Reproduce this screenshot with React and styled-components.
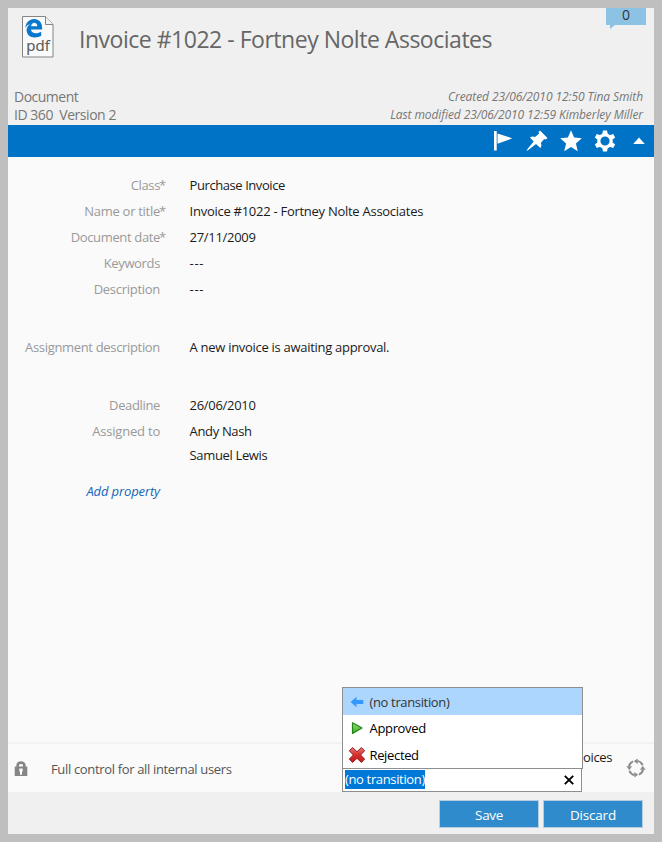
import React from 'react';
import styled, { createGlobalStyle, css } from 'styled-components';

const GlobalStyle = createGlobalStyle`
  * { box-sizing: border-box; }
  body { margin: 0; }
`;

const Card = styled.main`
  width: 662px;
  height: 842px;
  border: 8px solid #bfbfbf;
  display: flex;
  flex-direction: column;
  overflow: hidden;
  background: #fafafa;
  color: #1b1b1b;
  font: 13px/26px "Open Sans", "Noto Sans", sans-serif;
`;

const Text = styled.span`
  letter-spacing: ${(p) => p.$track ?? -0.35}px;
  white-space: pre;
`;

const Header = styled.header`
  height: 117px;
  flex: none;
  background: #f0f0f0;
  display: flex;
  flex-direction: column;
  justify-content: space-between;
`;

const Heading = styled.div`
  display: flex;
  align-items: flex-start;
  padding: 7px 8px 0 13px;
`;

const Title = styled.h1`
  flex: 1;
  margin: 8px 0 0 24px;
  font-size: 23px;
  line-height: 32px;
  font-weight: 400;
  letter-spacing: -0.48px;
  color: #666;
`;

const Comments = styled.div`
  position: relative;
  width: 40px;
  height: 17px;
  margin-top: -7px;
  background: #8cc3e4;
  color: #333;
  font-size: 14px;
  line-height: 14px;
  text-align: center;

  &::after {
    content: "";
    position: absolute;
    left: 4px;
    top: 17px;
    border-top: 4px solid #8cc3e4;
    border-right: 5px solid transparent;
  }
`;

const Meta = styled.div`
  display: flex;
  justify-content: space-between;
  padding: 0 11px 1px 6px;
  color: #777;
`;

const MetaBlock = styled.div`
  display: flex;
  flex-direction: column;
  font-size: 14px;
  line-height: 18px;
  ${(p) =>
    p.$side === 'right' &&
    css`
      align-items: flex-end;
      font-size: 12px;
      font-style: italic;
    `}
`;

const Toolbar = styled.nav`
  height: 32px;
  flex: none;
  background: #0173c7;
  display: flex;
  justify-content: flex-end;
  align-items: center;
`;

const ToolButton = styled.button`
  width: 34px;
  height: 32px;
  padding: 0;
  border: 0;
  background: none;
  display: grid;
  place-items: center;

  &:last-child {
    width: 32px;
    padding-left: 2px;
  }
`;

const Properties = styled.section`
  flex: 1;
  padding-top: 15px;
`;

const Property = styled.div`
  display: grid;
  grid-template-columns: 152px 1fr;
  column-gap: 29.6px;
  margin-bottom: ${(p) => p.$after ?? 0}px;
`;

const Label = styled.div`
  display: flex;
  justify-content: flex-end;
  color: #999;
`;

const Required = styled.span`
  width: 0;
  margin-left: -1px;
  margin-right: 1px;
`;

const Values = styled.div`
  display: flex;
  flex-direction: column;
`;

const Value = styled(Text)`
  & + & {
    line-height: 22px;
  }
`;

const AddProperty = styled.a`
  display: block;
  width: 152px;
  margin-top: 12px;
  text-align: right;
  font-style: italic;
  color: #1565b8;
`;

const StatusBar = styled.section`
  height: 50px;
  flex: none;
  border-top: 2px solid #f2f2f2;
  display: flex;
  align-items: center;
  padding: 1px 8px 0 6px;
`;

const Permissions = styled.div`
  width: 328px;
  display: flex;
  align-items: center;
  gap: 22px;
  color: #555;
`;

const StatePicker = styled.div`
  position: relative;
  width: 240px;
  height: 24px;
  align-self: flex-end;
`;

const StateInput = styled.div`
  height: 24px;
  border: 1px solid #8e8e8e;
  border-top-width: 0;
  background: #fff;
  display: flex;
  align-items: center;
  justify-content: space-between;
  padding: 0 7px 0 2px;
`;

const Selection = styled(Text)`
  height: 19px;
  line-height: 19px;
  background: #0078d7;
  color: #fff;
`;

const Menu = styled.div`
  position: absolute;
  left: 0;
  bottom: 23px;
  width: 241px;
  height: 82px;
  border: 1px solid #8e8e8e;
  background: #fff;
`;

const MenuItem = styled.div`
  display: flex;
  align-items: center;
  gap: 4.5px;
  height: ${(p) => (p.$active ? 27 : 26.5)}px;
  padding-left: 6px;
  color: ${(p) => (p.$active ? '#333' : '#000')};
  background: ${(p) => (p.$active ? '#add6ff' : '#fff')};
`;

const StateName = styled.div`
  flex: 1;
  align-self: flex-start;
  line-height: 24px;
  padding-left: 1px;
`;

const Footer = styled.footer`
  height: 42px;
  flex: none;
  background: #f0f0f0;
  display: flex;
  justify-content: flex-end;
  gap: 4px;
  padding: 8px 11px 0 0;
`;

const ActionButton = styled.button`
  width: 100px;
  height: 28px;
  padding: 1px 0 0;
  border: 1px solid #b5cde0;
  background: #308bcc;
  color: #fff;
  font: 13.5px/24px "Open Sans", sans-serif;
`;

const PdfIcon = () => (
  <svg width="34" height="44" viewBox="0 0 34 44">
    <path d="M1.500 1.500h23l7.500 8v32.500h-30.500z" fill="#fafafa" stroke="#858585" />
    <path d="M24.500 1.500v8h7.500" fill="#f0f0f0" stroke="#858585" />
    <path
      fill="#0878cf"
      fillRule="evenodd"
      d="M4.300 13C4.800 7.800 8.200 4.100 13.100 4.100c5.200 0 8 3.600 8 8.600v1.900H10c.2 2.500 2.300 3.700 4.900 3.700 2 0 3.800-.6 5.300-1.500v4c-1.800 1.100-3.900 1.700-6.400 1.700-5 0-8.200-2.900-8.200-7.400 0-2.800 1.500-5 4-6.400-2.500.7-4.100 2.100-5.300 4.300zM10.100 11.200h6.200c0-2.300-1.100-3.500-2.900-3.500s-3 1.300-3.300 3.500z"
    />
    <text x="17" y="36.300" textAnchor="middle" fontFamily="Open Sans" fontSize="15" fill="#5c5c5c" stroke="#5c5c5c" strokeWidth=".2">
      pdf
    </text>
  </svg>
);

const FlagIcon = () => (
  <svg width="20" height="22" viewBox="0 0 20 22" fill="#fff">
    <path d="M1 1h2.700v19.500H1zM4.500 3.500L19.300 8.300l-14.800 5.500z" />
  </svg>
);

const PinIcon = () => (
  <svg width="22" height="22" viewBox="0 0 22 22" fill="#fff">
    <path d="M14 .5L21.500 8l-1.800 1.500-1.500-.5-3.400 3.900c.9 1.700.7 3.500-.4 5.100L10 13.900 2.300 20 .5 21l1-1.900 6.200-7.600L3.900 7.600c1.700-1.200 3.500-1.300 5.100-.5l4-3.400-.4-1.700z" />
  </svg>
);

const StarIcon = () => (
  <svg width="22" height="22" viewBox="0 0 22 22" fill="#fff">
    <path d="M11 .3l3.100 7.300 7.700.7-5.900 5.200 1.900 7.800-6.800-4.300-6.800 4.300 1.900-7.800L.2 8.300l7.700-.7z" />
  </svg>
);

const GearIcon = () => (
  <svg width="22" height="22" viewBox="-11 -11 22 22">
    <circle r="6.200" fill="none" stroke="#fff" strokeWidth="3.200" />
    {[0, 60, 120, 180, 240, 300].map((a) => (
      <path key={a} transform={`rotate(${a})`} d="M-2.700-7l.7-3.600h4l.7 3.600z" fill="#fff" />
    ))}
  </svg>
);

const CollapseIcon = () => (
  <svg width="12" height="8" viewBox="0 0 12 8">
    <path d="M6 .5l5.800 6.500H.2z" fill="#fff" />
  </svg>
);

const LockIcon = () => (
  <svg width="15" height="17" viewBox="0 0 15 17">
    <path d="M3.700 8V4.600a3.500 3 0 0 1 6.600 0V8" fill="none" stroke="#858585" strokeWidth="2.600" />
    <path d="M.7 6.500h12.600v9.500H.7z" fill="#858585" />
    <path d="M5.300 8.500h3.400v3H8v3.300H6v-3.300h-.7z" fill="#fafafa" />
  </svg>
);

const BackIcon = () => (
  <svg width="16" height="16" viewBox="0 0 16 16">
    <path d="M1.700 8L7.500 2.700v3.200h6.800v4.200H7.500v3.200z" fill="#3399ff" />
  </svg>
);

const ApproveIcon = () => (
  <svg width="16" height="16" viewBox="0 0 16 16">
    <defs>
      <linearGradient id="approve" x2="0" y2="1">
        <stop stopColor="#9be07a" />
        <stop offset="1" stopColor="#36ae22" />
      </linearGradient>
    </defs>
    <path d="M3.500 2.800L13 8l-9.500 5.500z" fill="url(#approve)" stroke="#23821a" strokeWidth="1.200" strokeLinejoin="round" />
  </svg>
);

const RejectIcon = () => (
  <svg width="16" height="16" viewBox="0 0 16 16" overflow="visible">
    <defs>
      <linearGradient id="reject" x2="0" y2="1">
        <stop stopColor="#ed7777" />
        <stop offset=".5" stopColor="#d72c2c" />
        <stop offset="1" stopColor="#c51c1c" />
      </linearGradient>
    </defs>
    <path
      d="M3.600.6L8 4.700 12.400.6l3.200 3.200L11.600 8l4 4.100-3.200 3.300L8 11.300l-4.500 4.100-3.200-3.300L4.400 8 .3 3.800z"
      fill="url(#reject)"
      stroke="#8f1d1d"
      strokeLinejoin="round"
    />
  </svg>
);

const ClearIcon = () => (
  <svg width="10" height="10" viewBox="0 0 10 10">
    <path d="M.8.8l8.400 8.400M9.200.8L.8 9.200" stroke="#000" strokeWidth="1.900" />
  </svg>
);

const WorkflowIcon = () => (
  <svg width="20" height="20" viewBox="-10 -9 20 20">
    {[0, 90, 180, 270].map((a) => (
      <g key={a} transform={`rotate(${a})`}>
        <path d="M1.600-7.100A7.200 7.200 0 0 1 6.600-2.900" fill="none" stroke="#8c8c8c" strokeWidth="2" />
        <path d="M-2.200-6.700L1.700-9.600v5.600z" fill="#8c8c8c" />
      </g>
    ))}
  </svg>
);

const tools = [
  ['Flag', FlagIcon],
  ['Pin', PinIcon],
  ['Favorite', StarIcon],
  ['Settings', GearIcon],
  ['Collapse', CollapseIcon],
];

const properties = [
  { label: 'Class', required: true, values: ['Purchase Invoice'], track: -0.43 },
  { label: 'Name or title', required: true, values: ['Invoice #1022 - Fortney Nolte Associates'], track: -0.27, labelTrack: -0.28 },
  { label: 'Document date', required: true, values: ['27/11/2009'], track: -0.3, labelTrack: -0.35 },
  { label: 'Keywords', values: ['---'], track: 0.6 },
  { label: 'Description', values: ['---'], track: 0.6, after: 32, labelTrack: -0.28 },
  { label: 'Assignment description', values: ['A new invoice is awaiting approval.'], track: -0.29, after: 32, labelTrack: -0.33 },
  { label: 'Deadline', values: ['26/06/2010'], track: -0.3 },
  { label: 'Assigned to', values: ['Andy Nash', 'Samuel Lewis'], labelTrack: -0.2 },
];

export default function App() {
  return (
    <>
      <GlobalStyle />
      <Card>
        <Header>
          <Heading>
            <PdfIcon />
            <Title>Invoice #1022 - Fortney Nolte Associates</Title>
            <Comments>0</Comments>
          </Heading>
          <Meta>
            <MetaBlock>
              <Text $track={-0.5}>Document</Text>
              <Text $track={-0.46}>{'ID 360  Version 2'}</Text>
            </MetaBlock>
            <MetaBlock $side="right">
              <Text $track={-0.08}>Created 23/06/2010 12:50 Tina Smith</Text>
              <Text $track={-0.09}>Last modified 23/06/2010 12:59 Kimberley Miller</Text>
            </MetaBlock>
          </Meta>
        </Header>
        <Toolbar>
          {tools.map(([name, Icon]) => (
            <ToolButton key={name} aria-label={name}>
              <Icon />
            </ToolButton>
          ))}
        </Toolbar>
        <Properties>
          {properties.map((p) => (
            <Property key={p.label} $after={p.after}>
              <Label>
                <Text $track={p.labelTrack}>{p.label}</Text>
                {p.required && <Required>*</Required>}
              </Label>
              <Values>
                {p.values.map((v) => (
                  <Value key={v} $track={p.track}>
                    {v}
                  </Value>
                ))}
              </Values>
            </Property>
          ))}
          <AddProperty>
            <Text $track={-0.12}>Add property</Text>
          </AddProperty>
        </Properties>
        <StatusBar>
          <Permissions>
            <LockIcon />
            <Text $track={-0.34}>Full control for all internal users</Text>
          </Permissions>
          <StatePicker>
            <StateInput>
              <Selection>(no transition)</Selection>
              <ClearIcon />
            </StateInput>
            <Menu>
              <MenuItem $active>
                <BackIcon />
                <Text>(no transition)</Text>
              </MenuItem>
              <MenuItem>
                <ApproveIcon />
                <Text $track={-0.33}>Approved</Text>
              </MenuItem>
              <MenuItem>
                <RejectIcon />
                <Text>Rejected</Text>
              </MenuItem>
            </Menu>
          </StatePicker>
          <StateName>
            <Text>oices</Text>
          </StateName>
          <WorkflowIcon />
        </StatusBar>
        <Footer>
          <ActionButton>
            <Text>Save</Text>
          </ActionButton>
          <ActionButton>
            <Text $track={-0.2}>Discard</Text>
          </ActionButton>
        </Footer>
      </Card>
    </>
  );
}
